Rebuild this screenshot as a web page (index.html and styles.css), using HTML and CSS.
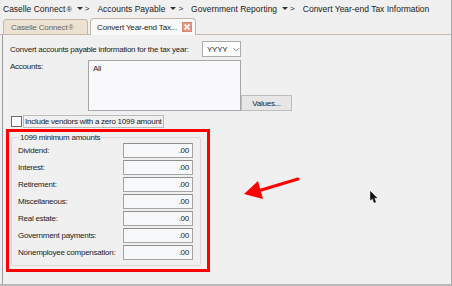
FILE: index.html
```html
<!DOCTYPE html>
<html>
<head>
<meta charset="utf-8">
<link rel="stylesheet" href="styles.css">
</head>
<body>
<div class="window">
  <div class="crumbs">
    <span class="crumb">Caselle Connect<span class="reg">®</span></span><span class="sep"><span class="tri"></span>&gt;</span>
    <span class="crumb">Accounts Payable</span><span class="sep"><span class="tri"></span>&gt;</span>
    <span class="crumb">Government Reporting</span><span class="sep"><span class="tri"></span>&gt;</span>
    <span class="crumb">Convert Year-end Tax Information</span>
  </div>
  <div class="tabs">
    <div class="tab inactive">Caselle Connect<span class="reg">®</span></div>
    <div class="tab active">Convert Year-end Tax...<span class="close"><svg width="8" height="8" viewBox="0 0 8 8"><path d="M1.5 1.5L6.5 6.5M6.5 1.5L1.5 6.5" stroke="#fff" stroke-width="1.6"/></svg></span></div>
  </div>
  <div class="panel">
    <div class="row year">
      <span class="lbl">Convert accounts payable information for the tax year:</span>
      <span class="select">YYYY<svg class="chev" width="7" height="5" viewBox="0 0 7 5"><path d="M0.5 1L3.5 4L6.5 1" fill="none" stroke="#777" stroke-width="1"/></svg></span>
    </div>
    <div class="row accounts">
      <span class="lbl acc-lbl">Accounts:</span>
      <div class="listbox">All</div>
      <button class="btn">Values...</button>
    </div>
    <div class="row check">
      <span class="box"></span><span class="chk-lbl">Include vendors with a zero 1099 amount</span>
    </div>
    <div class="highlight">
      <fieldset class="group">
        <legend>1099 minimum amounts</legend>
        <div class="amt"><span>Dividend:</span><span class="inp">.00</span></div>
        <div class="amt"><span>Interest:</span><span class="inp">.00</span></div>
        <div class="amt"><span>Retirement:</span><span class="inp">.00</span></div>
        <div class="amt"><span>Miscellaneous:</span><span class="inp">.00</span></div>
        <div class="amt"><span>Real estate:</span><span class="inp">.00</span></div>
        <div class="amt"><span>Government payments:</span><span class="inp">.00</span></div>
        <div class="amt"><span>Nonemployee compensation:</span><span class="inp">.00</span></div>
      </fieldset>
    </div>
  </div>
  <svg class="arrow" width="70" height="30" viewBox="0 0 70 30">
    <path d="M56 3L16 15" stroke="#ff0000" stroke-width="3" stroke-linecap="round"/>
    <path d="M2 18L16 5L21 23Z" fill="#ff0000"/>
  </svg>
  <svg class="cursor" width="8" height="13" viewBox="0 0 8 13">
    <path d="M0.5 0.5L0.5 9L2.5 7.3L4.2 11.5L5.6 10.9L4 6.8L6.8 6.8Z" fill="#111" stroke="#111" stroke-width="0.6" stroke-linejoin="round"/>
  </svg>
</div>
</body>
</html>
```
FILE: styles.css
```css
html, body {
  margin: 0;
  padding: 0;
}
body {
  width: 452px;
  height: 286px;
  background: #f0f0f0;
  font-family: Tahoma, "Liberation Sans", Arial, sans-serif;
  color: #222;
  overflow: hidden;
}
.window {
  position: relative;
  width: 452px;
  height: 286px;
  box-sizing: border-box;
  border-right: 1px solid #a8a8a8;
  border-bottom: 2px solid #b8b8b8;
  display: flex;
  flex-direction: column;
}
.crumbs {
  height: 17px;
  display: flex;
  align-items: center;
  padding-left: 3px;
  font-size: 8.5px;
  color: #1a1a1a;
  white-space: nowrap;
}
.reg {
  font-size: 0.85em;
  margin-left: 1px;
}
.sep {
  display: inline-flex;
  align-items: center;
  gap: 2px;
  margin: 0 8px 0 5px;
  font-size: 8px;
}
.tri {
  width: 0;
  height: 0;
  border-left: 3px solid transparent;
  border-right: 3px solid transparent;
  border-top: 3px solid #333;
}
.tabs {
  height: 17px;
  display: flex;
  align-items: flex-end;
  gap: 2px;
  padding-left: 3px;
  border-bottom: 1px solid #c9b8aa;
}
.tab {
  box-sizing: border-box;
  display: flex;
  align-items: center;
  font-size: 8px;
  letter-spacing: -0.15px;
  border: 1px solid #c4b6a8;
  border-bottom: none;
  border-radius: 4px 4px 0 0;
  white-space: nowrap;
  overflow: hidden;
}
.tab.inactive {
  width: 85px;
  height: 15px;
  padding-left: 7px;
  background: #ebe2d2;
  color: #666;
}
.tab.active {
  width: 106px;
  height: 17px;
  padding-left: 6px;
  background: #f9f9f9;
  color: #222;
  margin-bottom: -1px;
}
.close {
  margin-left: 5px;
  flex: none;
  width: 10px;
  height: 10px;
  box-sizing: border-box;
  border: 1px solid #d7866f;
  background: #ec9783;
  display: flex;
  align-items: center;
  justify-content: center;
}
.panel {
  flex: 1;
  margin-left: 2px;
  border-left: 1px solid #9a9a9a;
  padding: 6px 0 0 7px;
  font-size: 8px;
  letter-spacing: -0.25px;
  color: #222;
}
.row {
  display: flex;
}
.year {
  align-items: center;
  height: 16px;
}
.year .lbl {
  width: 192px;
  white-space: nowrap;
}
.select {
  box-sizing: border-box;
  width: 39px;
  height: 16px;
  border: 1px solid #acacac;
  background: #fff;
  display: flex;
  align-items: center;
  padding-left: 4px;
  font-size: 8px;
  gap: 6px;
}
.accounts {
  margin-top: 3px;
  align-items: flex-start;
}
.acc-lbl {
  width: 78px;
  padding-top: 2px;
}
.listbox {
  box-sizing: border-box;
  width: 153px;
  height: 51px;
  border: 1px solid #a6a6a6;
  background: #f9f9fc;
  padding: 3px 0 0 4px;
}
.btn {
  box-sizing: border-box;
  width: 51px;
  height: 16px;
  margin-top: 35px;
  border: 1px solid #bdbdbd;
  background: #e6e6e6;
  font-family: inherit;
  font-size: 8px;
  letter-spacing: -0.2px;
  color: #222;
  padding: 0;
}
.check {
  margin-top: 4px;
  align-items: center;
  height: 13px;
}
.box {
  box-sizing: border-box;
  width: 11px;
  height: 11px;
  border: 1px solid #6c6c6c;
  background: #fff;
  margin-left: 1px;
}
.chk-lbl {
  box-sizing: border-box;
  margin-left: 1px;
  height: 13px;
  line-height: 11px;
  border: 1px solid #bbb;
  padding: 0 1px;
}
.highlight {
  box-sizing: border-box;
  width: 204px;
  height: 143px;
  margin: 1px 0 0 -4px;
  border: 3px solid #ff0000;
  padding: 1px 6px 0 2px;
}
.group {
  margin: 0;
  box-sizing: border-box;
  height: 133px;
  border: 1px solid #dadada;
  border-radius: 2px;
  padding: 1px 7px 0 6px;
}
.group legend {
  padding: 0 1px;
  margin-left: 1px;
  font-size: 8px;
}
.amt {
  display: flex;
  justify-content: space-between;
  align-items: center;
  height: 15px;
  margin-bottom: 2px;
}
.inp {
  box-sizing: border-box;
  width: 70px;
  height: 15px;
  border: 1px solid #a4a4a4;
  border-top-color: #8e8e8e;
  background: #f7f8fa;
  text-align: right;
  padding-right: 3px;
  line-height: 13px;
}
.arrow {
  position: absolute;
  left: 242px;
  top: 176px;
}
.cursor {
  position: absolute;
  left: 370px;
  top: 191px;
}
```
